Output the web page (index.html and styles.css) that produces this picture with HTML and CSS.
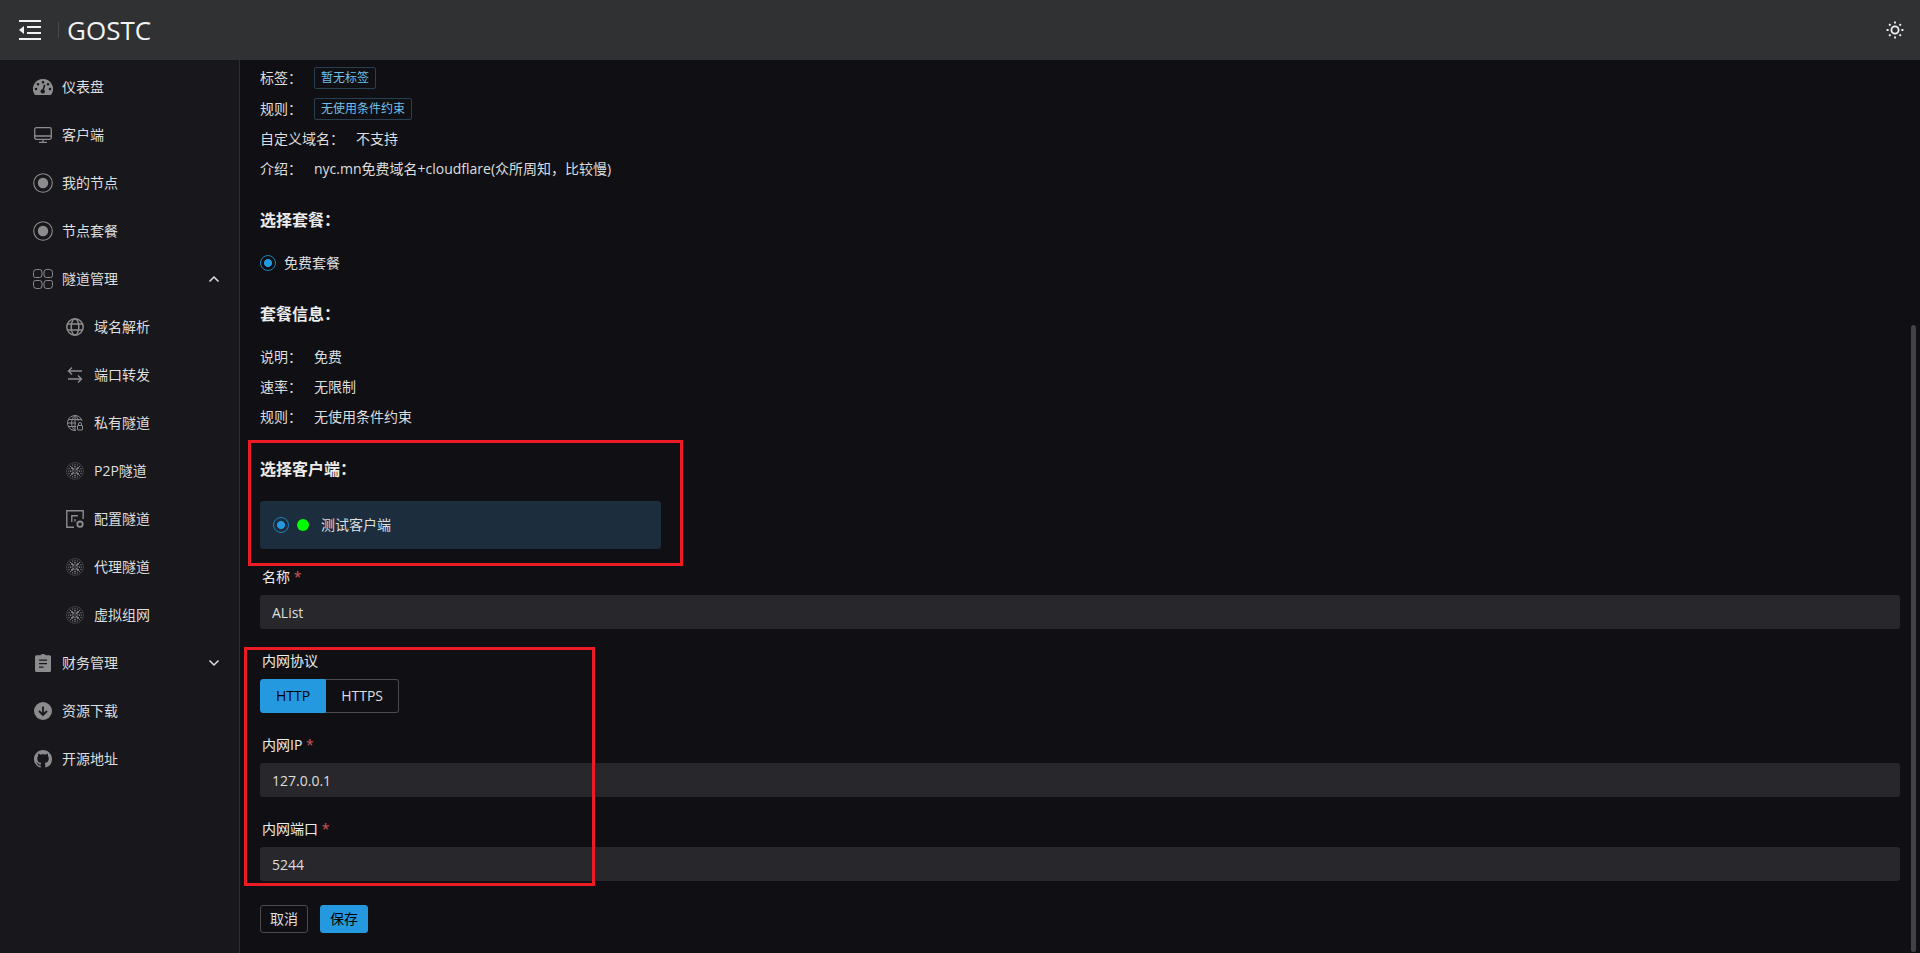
FILE: index.html
```
<!DOCTYPE html>
<html lang="zh-CN">
<head>
<meta charset="utf-8">
<title>GOSTC</title>
<link rel="stylesheet" href="styles.css">
</head>
<body>

<svg class="sprite" aria-hidden="true">
  <symbol id="i-record" viewBox="0 0 20 20">
    <circle cx="10" cy="10" r="9.3" fill="none" stroke="currentColor" stroke-width="1.1"/>
    <circle cx="10" cy="10" r="5.2" fill="currentColor"/>
  </symbol>
  <symbol id="i-mesh" viewBox="0 0 18 18">
    <g fill="none" stroke="currentColor" stroke-linecap="round">
      <circle cx="9" cy="9" r="8.3" pathLength="24" stroke-width=".9" stroke-dasharray="0 1"/>
      <circle cx="9" cy="9" r="6.4" pathLength="16" stroke-width="1.2" stroke-dasharray="0 1"/>
      <circle cx="9" cy="9" r="4.400" pathLength="8" stroke-width="1.700" stroke-dasharray="0 1"/>
      <circle cx="9" cy="9" r="2.300" pathLength="8" stroke-width="1.200" stroke-dasharray="0 1" stroke-dashoffset=".5"/>
      <path d="M5.800 5.800l1.600 1.600M12.200 5.800l-1.600 1.600M5.800 12.200l1.600-1.600M12.200 12.200l-1.600-1.600M9 9h.01" stroke-width="1.300"/>
    </g>
  </symbol>
</svg>

<header class="header">
  <button class="icon-btn" aria-label="收起菜单">
    <svg width="24" height="24" viewBox="0 0 24 24" fill="none" stroke="currentColor" stroke-width="2">
      <path d="M1 3h22M9 9h14M9 15h14M1 21h22"/>
      <path d="M1 12l5-4v8z" fill="currentColor" stroke="none"/>
    </svg>
  </button>
  <span class="divider"></span>
  <span class="brand">GOSTC</span>
  <button class="icon-btn theme-btn" aria-label="切换主题">
    <svg width="18" height="18" viewBox="0 0 18 18" fill="none" stroke="currentColor" stroke-width="1.8">
      <circle cx="9" cy="9" r="3.6"/>
      <path d="M9 .6v2M9 15.4v2M.6 9h2M15.4 9h2M3.1 3.1l1.4 1.4M13.5 13.5l1.4 1.4M3.1 14.9l1.4-1.4M13.5 4.5l1.4-1.4"/>
    </svg>
  </button>
</header>

<div class="layout">
  <nav class="sidebar">
    <a class="menu-item" href="#">
      <span class="menu-icon"><svg width="20" height="16" viewBox="0 0 20 16"><path fill="currentColor" fill-rule="evenodd" d="M10 0a10 10 0 0 1 8.700 15q-.5 1-1.300 1H2.600q-.8 0-1.300-1A10 10 0 0 1 10 0zM10 2a1.300 1.300 0 1 0 0 2.600A1.300 1.300 0 0 0 10 2zM5 4a1.300 1.300 0 1 0 0 2.600A1.300 1.300 0 0 0 5 4zM15 4a1.300 1.300 0 1 0 0 2.600A1.300 1.300 0 0 0 15 4zM3 8.700a1.300 1.300 0 1 0 0 2.600 1.300 1.300 0 0 0 0-2.600zM17 8.700a1.300 1.300 0 1 0 0 2.600 1.300 1.300 0 0 0 0-2.600zM11 5.500l-1.400 4.700a2.200 2.200 0 1 0 1.500.5L12.400 6z"/></svg></span>
      仪表盘
    </a>
    <a class="menu-item" href="#">
      <span class="menu-icon"><svg width="18" height="16" viewBox="0 0 18 16" fill="none" stroke="currentColor" stroke-width="1.300"><rect x=".7" y=".7" width="16.600" height="11.600" rx="1.800"/><path d="M1 9h16M9 12v3M5 15.300h8"/></svg></span>
      客户端
    </a>
    <a class="menu-item" href="#">
      <span class="menu-icon"><svg width="20" height="20"><use href="#i-record"/></svg></span>
      我的节点
    </a>
    <a class="menu-item" href="#">
      <span class="menu-icon"><svg width="20" height="20"><use href="#i-record"/></svg></span>
      节点套餐
    </a>
    <a class="menu-item" href="#">
      <span class="menu-icon"><svg width="20" height="20" viewBox="0 0 20 20" fill="none" stroke="currentColor" stroke-width="1"><path d="M3.500.5h3q2.500 0 2.500 2.500v3q0 2.500-2.500 2.500h-4Q.5 8.500.5 6.500v-3q0-3 3-3zM13.500.5h3q3 0 3 3v3q0 2-2 2h-4q-2.500 0-2.500-2.500V3q0-2.500 2.500-2.500zM2.500 11.500h4Q9 11.500 9 14v3q0 2.500-2.500 2.500h-3q-3 0-3-3v-3q0-2 2-2zM13.500 11.500h4q2 0 2 2v3q0 3-3 3h-3Q11 19.500 11 17v-3q0-2.500 2.500-2.500z"/></svg></span>
      隧道管理
      <svg class="arrow" width="12" height="8" viewBox="0 0 12 8"><path d="M1.500 6.500L6 2l4.500 4.500"/></svg>
    </a>
    <div class="submenu">
      <a class="menu-item" href="#">
        <span class="menu-icon"><svg width="18" height="18" viewBox="0 0 18 18" fill="none" stroke="currentColor" stroke-width="1.500"><circle cx="9" cy="9" r="8.200"/><ellipse cx="9" cy="9" rx="3.800" ry="8.200"/><path d="M1.500 6h15M1.500 12h15"/></svg></span>
        域名解析
      </a>
      <a class="menu-item" href="#">
        <span class="menu-icon"><svg width="16" height="16" viewBox="0 0 16 16" fill="none" stroke="currentColor" stroke-width="1.400"><path d="M15 4H1.500M5 .5L1.500 4 5 7.500M1 12h13.500M11 8.500l3.500 3.500-3.500 3.500"/></svg></span>
        端口转发
      </a>
      <a class="menu-item" href="#">
        <span class="menu-icon"><svg width="16" height="16" viewBox="0 0 16 16" fill="none" stroke="currentColor" stroke-width="1"><path d="M9 15.400A7.500 7.500 0 1 1 15.200 6M8 .5v15M.5 8H9M1.500 4.500h13M1.500 11.500H9M8 .5C3.500 4 3.500 12 8 15.500M8 .5c2 1.500 3 3.500 3.300 5.500"/><rect x="10.500" y="10.500" width="5" height="4.500" rx=".5"/><path d="M11.500 10.500V9a1.500 1.500 0 0 1 3 0v1.500"/></svg></span>
        私有隧道
      </a>
      <a class="menu-item" href="#">
        <span class="menu-icon"><svg width="18" height="18"><use href="#i-mesh"/></svg></span>
        P2P隧道
      </a>
      <a class="menu-item" href="#">
        <span class="menu-icon"><svg width="18" height="18" viewBox="0 0 18 18" fill="none" stroke="currentColor" stroke-width="1.400"><path d="M8 17.200H.8V.8h16.400V9M5.800 12V5.800H12M9 9v2.500"/><circle cx="14" cy="14.200" r="2.700" stroke-width="1.800"/></svg></span>
        配置隧道
      </a>
      <a class="menu-item" href="#">
        <span class="menu-icon"><svg width="18" height="18"><use href="#i-mesh"/></svg></span>
        代理隧道
      </a>
      <a class="menu-item" href="#">
        <span class="menu-icon"><svg width="18" height="18"><use href="#i-mesh"/></svg></span>
        虚拟组网
      </a>
    </div>
    <a class="menu-item" href="#">
      <span class="menu-icon"><svg width="16" height="18" viewBox="0 0 16 18"><path fill="currentColor" fill-rule="evenodd" d="M5.500 1.200Q6 0 8 0t2.500 1.200h4Q16 1.200 16 2.700v13.800q0 1.500-1.500 1.500h-13Q0 18 0 16.500V2.700q0-1.500 1.500-1.500zM4 5.500v1.300h8V5.500zM4 9v1.300h8V9zM4 12.500v1.300h4.500v-1.300z"/></svg></span>
      财务管理
      <svg class="arrow" width="12" height="8" viewBox="0 0 12 8"><path d="M1.500 1.500L6 6l4.500-4.500"/></svg>
    </a>
    <a class="menu-item" href="#">
      <span class="menu-icon"><svg width="18" height="18" viewBox="0 0 18 18"><circle cx="9" cy="9" r="9" fill="currentColor"/><path d="M9 4.500v8.500M5 9l4 4 4-4" fill="none" stroke="#18181c" stroke-width="1.800"/></svg></span>
      资源下载
    </a>
    <a class="menu-item" href="#">
      <span class="menu-icon"><svg width="18" height="18" viewBox="0 0 16 16"><path fill="currentColor" d="M8 0C3.580 0 0 3.580 0 8c0 3.540 2.290 6.530 5.470 7.590.4.070.55-.17.55-.38 0-.19-.01-.82-.01-1.490-2.010.37-2.530-.49-2.690-.94-.09-.23-.48-.94-.82-1.130-.28-.15-.68-.52-.01-.53.63-.01 1.080.58 1.230.82.72 1.210 1.870.87 2.330.66.07-.52.28-.87.51-1.070-1.780-.2-3.640-.89-3.640-3.950 0-.87.31-1.590.82-2.150-.08-.2-.36-1.020.08-2.120 0 0 .67-.21 2.200.82.64-.18 1.320-.27 2-.27s1.360.09 2 .27c1.530-1.040 2.200-.82 2.200-.82.44 1.100.16 1.920.08 2.120.51.56.82 1.270.82 2.150 0 3.070-1.870 3.750-3.650 3.950.29.25.54.73.54 1.480 0 1.070-.01 1.930-.01 2.200 0 .21.15.46.55.38A8.010 8.010 0 0 0 16 8c0-4.420-3.580-8-8-8z"/></svg></span>
      开源地址
    </a>
  </nav>

  <main class="content">
    <dl class="info">
      <div class="tag-row"><dt>标签：</dt><dd><span class="tag">暂无标签</span></dd></div>
      <div class="tag-row"><dt>规则：</dt><dd><span class="tag">无使用条件约束</span></dd></div>
      <div><dt>自定义域名：</dt><dd>不支持</dd></div>
      <div><dt>介绍：</dt><dd>nyc.mn免费域名+cloudflare(众所周知，比较慢)</dd></div>
    </dl>

    <h4>选择套餐：</h4>
    <label class="radio"><input type="radio" name="plan" checked>免费套餐</label>

    <h4>套餐信息：</h4>
    <dl class="info plan-info">
      <div><dt>说明：</dt><dd>免费</dd></div>
      <div><dt>速率：</dt><dd>无限制</dd></div>
      <div><dt>规则：</dt><dd>无使用条件约束</dd></div>
    </dl>

    <section class="clients">
      <h4>选择客户端：</h4>
      <div class="client-grid">
        <label class="client-card">
          <input type="radio" name="client" checked>
          <span class="dot"></span>
          测试客户端
        </label>
        <div class="mark mark-client"></div>
      </div>
    </section>

    <form class="form">
      <div class="form-item">
        <label for="name">名称 <span class="required">*</span></label>
        <input class="text-input" type="text" id="name" value="AList">
      </div>
      <div class="target">
        <div class="form-item">
          <span class="label" id="protocol-label">内网协议</span>
          <div class="btn-group" role="group" aria-labelledby="protocol-label">
            <button type="button" class="active">HTTP</button>
            <button type="button">HTTPS</button>
          </div>
        </div>
        <div class="form-item">
          <label for="ip">内网IP <span class="required">*</span></label>
          <input class="text-input" type="text" id="ip" value="127.0.0.1">
        </div>
        <div class="form-item">
          <label for="port">内网端口 <span class="required">*</span></label>
          <input class="text-input" type="text" id="port" value="5244">
        </div>
        <div class="mark mark-target"></div>
      </div>
      <div class="actions">
        <button type="button" class="btn">取消</button>
        <button type="button" class="btn primary">保存</button>
      </div>
    </form>
    <div class="scroll-thumb"></div>
  </main>
</div>

</body>
</html>
```

FILE: styles.css
```
* {
  box-sizing: border-box;
}

body {
  margin: 0;
  height: 100vh;
  display: flex;
  flex-direction: column;
  overflow: hidden;
  background: #101014;
  color: #dededf;
  font-family: "Open Sans", "Noto Sans CJK SC", sans-serif;
  font-size: 14px;
  line-height: 22px;
}

button, input {
  font: inherit;
  color: inherit;
}

.sprite {
  display: none;
}

svg {
  display: block;
}

/* header */
.header {
  display: flex;
  align-items: center;
  flex: none;
  height: 60px;
  padding: 0 16px 0 18px;
  background: #303132;
  color: #f2f2f2;
}

.icon-btn {
  padding: 0;
  border: 0;
  background: none;
  cursor: pointer;
}

.divider {
  width: 1px;
  height: 16px;
  margin: 0 8px 0 16px;
  background: #48484e;
}

.brand {
  font-size: 26px;
  line-height: 36px;
}

.theme-btn {
  margin-left: auto;
}

/* sidebar */
.layout {
  display: flex;
  flex: 1;
  min-height: 0;
}

.sidebar {
  flex: none;
  width: 240px;
  padding-top: 3px;
  background: #18181c;
  border-right: 1px solid #2d2d30;
}

.menu-item {
  display: flex;
  align-items: center;
  height: 48px;
  padding: 0 19px 0 32px;
  color: #dededf;
  text-decoration: none;
}

.submenu .menu-item {
  padding-left: 64px;
}

.menu-icon {
  display: flex;
  align-items: center;
  justify-content: center;
  width: 22px;
  margin-right: 8px;
  color: #8c8c8e;
}

.arrow {
  margin-left: auto;
  fill: none;
  stroke: #dededf;
  stroke-width: 1.5;
}

/* content */
.content {
  position: relative;
  flex: 1;
  min-width: 0;
  padding: 6px 20px 0;
  overflow: hidden;
}

.info {
  display: flex;
  flex-direction: column;
  gap: 8px;
  margin: 0;
}

.plan-info {
  padding-bottom: 1px;
}

.info div {
  display: flex;
  align-items: center;
  gap: 12px;
  height: 22px;
}

.info .tag-row {
  height: 23px;
}

.info dd {
  margin: 0;
}

.tag {
  display: block;
  padding: 0 6px;
  border: 1px solid #274150;
  border-radius: 2px;
  color: #70c0e8;
  font-size: 12px;
  line-height: 20px;
}

h4 {
  margin: 28px 0 20px;
  color: #ececec;
  font-size: 16px;
  line-height: 24px;
  font-weight: 700;
}

input[type="radio"] {
  appearance: none;
  width: 16px;
  height: 16px;
  margin: 0;
  border: 1px solid #2080b8;
  border-radius: 50%;
  background: radial-gradient(circle closest-side, #2499df 52%, transparent 62%);
}

.radio {
  display: flex;
  align-items: center;
  gap: 8px;
}

.client-grid {
  position: relative;
  display: grid;
  grid-template-columns: repeat(4, 1fr);
  gap: 12px;
}

.client-card {
  display: flex;
  align-items: center;
  height: 48px;
  padding: 0 13px;
  border-radius: 3px;
  background: #1c2d3e;
}

.dot {
  width: 12px;
  height: 12px;
  margin: 0 12px 0 8px;
  border-radius: 50%;
  background: #00ff00;
}

/* form */
.form {
  padding-top: 17px;
}

.form-item {
  margin-bottom: 21px;
}

.form-item label,
.form-item .label {
  display: block;
  height: 29px;
  padding-left: 2px;
  color: #ececec;
}

.required {
  color: #d05656;
}

.text-input {
  display: block;
  width: 100%;
  height: 34px;
  padding: 0 12px;
  border: 0;
  border-radius: 3px;
  background: #28282c;
}

.btn-group {
  display: flex;
}

.btn-group button {
  height: 34px;
  padding: 0 15px;
  border: 1px solid #4a4a4f;
  border-left: 0;
  border-radius: 0 3px 3px 0;
  background: none;
}

.btn-group .active {
  border: 1px solid #2499df;
  border-radius: 3px 0 0 3px;
  background: #2499df;
  color: #000;
}

.target {
  position: relative;
}

.actions {
  display: flex;
  gap: 12px;
  padding-top: 3px;
}

.btn {
  width: 48px;
  height: 28px;
  padding: 0;
  border: 1px solid #4a4a4f;
  border-radius: 3px;
  background: none;
}

.btn.primary {
  border-color: #2499df;
  background: #2499df;
  color: #000;
}

/* red highlight frames */
.mark {
  position: absolute;
  border: 3px solid #ed1c24;
  pointer-events: none;
}

.mark-client {
  top: -61px;
  left: -12px;
  width: 435px;
  height: 126px;
}

.mark-target {
  top: -3px;
  left: -16px;
  width: 351px;
  height: 239px;
}

.scroll-thumb {
  position: absolute;
  top: 265px;
  right: 4px;
  bottom: 1px;
  width: 5px;
  border-radius: 3px;
  background: #434346;
}
```
